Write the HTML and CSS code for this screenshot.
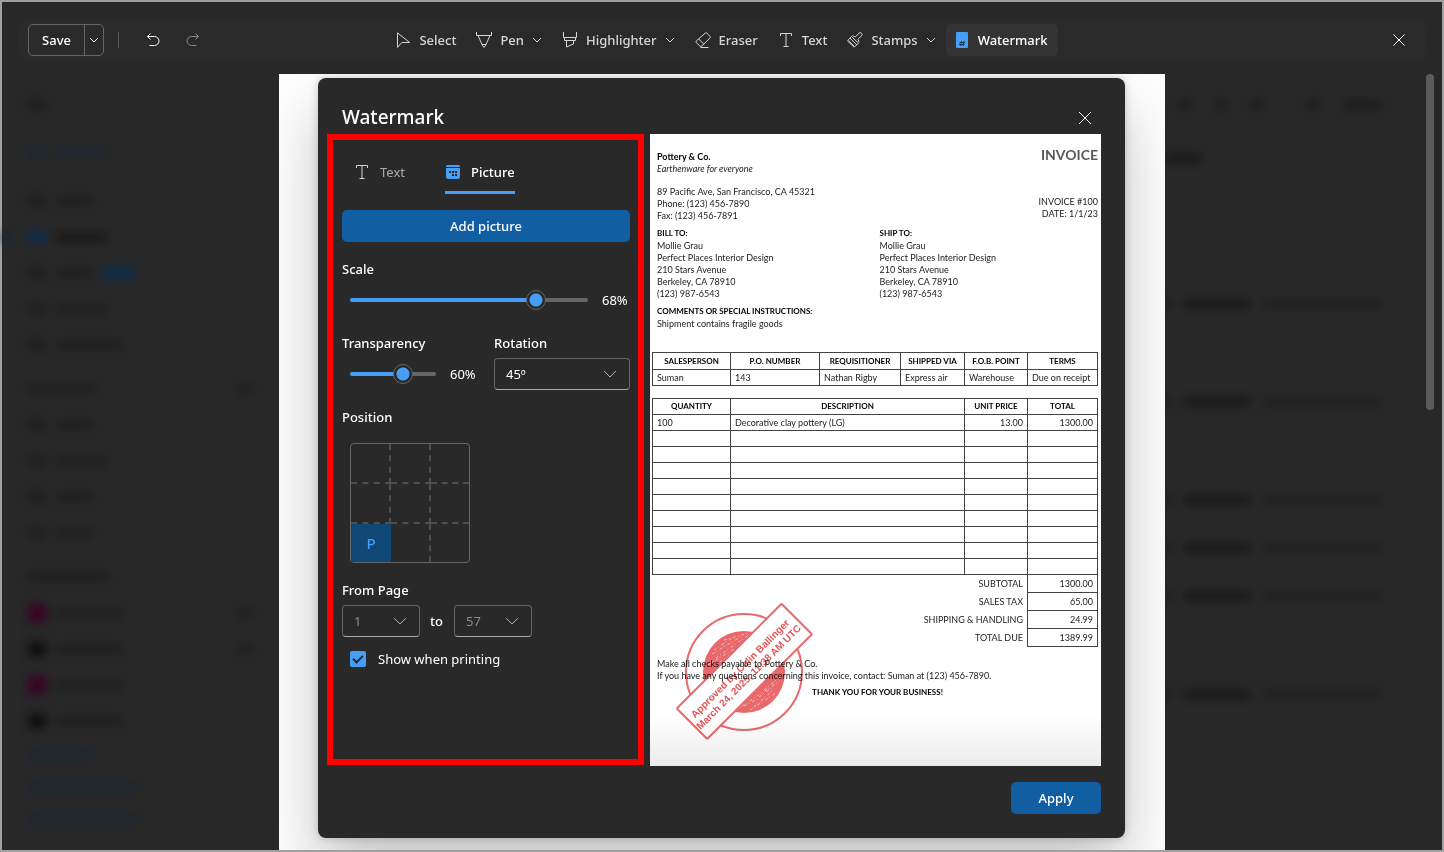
FILE: index.html
```
<!DOCTYPE html>
<html lang="en">
<head>
    <meta charset="UTF-8">
    <meta name="viewport" content="width=device-width, initial-scale=1.0">
    <title>Watermark</title>
    <link rel="stylesheet" href="styles.css">
</head>
<body>

<div class="window">
    <header class="toolbar">
        <div class="toolbar-left">
            <div class="split">
                <button class="split-main">Save</button>
                <button class="split-menu" aria-label="Save options">
                    <svg width="10" height="10" viewBox="0 0 10 10"><path d="M1 3l4 4 4-4"/></svg>
                </button>
            </div>
            <span class="divider"></span>
            <button class="icon-btn" aria-label="Undo">
                <svg width="16" height="16" viewBox="0 0 16 16"><path d="M5.500 1.500l-3 3 3 3M2.500 4.500h7a4.500 4.500 0 0 1 0 9H4.500"/></svg>
            </button>
            <button class="icon-btn dim" aria-label="Redo">
                <svg width="16" height="16" viewBox="0 0 16 16"><path d="M10.500 1.500l3 3-3 3M13.500 4.500h-7a4.500 4.500 0 0 0 0 9h5"/></svg>
            </button>
        </div>

        <nav class="tools">
            <button class="tool">
                <svg width="16" height="16" viewBox="0 0 16 16"><path d="M2.500 .8v14.600l4.300-4.900h7.800z"/></svg>
                Select
            </button>
            <button class="tool">
                <svg width="16" height="16" viewBox="0 0 16 16"><path d="M.5 0v3.500h15V0M2 3.500l4.200 9.500L8 15.500 9.800 13 14 3.500M6 12.500h4"/></svg>
                Pen
                <svg class="chev" width="10" height="10" viewBox="0 0 10 10"><path d="M1 3l4 4 4-4"/></svg>
            </button>
            <button class="tool">
                <svg width="16" height="16" viewBox="0 0 16 16"><path d="M1.500 0v5.500h13V0M2.500 5.500v3h11v-3M4.500 8.500v6.500l7-3V8.500"/></svg>
                Highlighter
                <svg class="chev" width="10" height="10" viewBox="0 0 10 10"><path d="M1 3l4 4 4-4"/></svg>
            </button>
            <button class="tool">
                <svg width="16" height="16" viewBox="0 0 16 16"><path d="M10.300 1q.7-.6 1.400 0l3.400 3.400q.6.7 0 1.400L7 13.900q-1.200 1-2.400 0L1.200 10.500q-.7-.7 0-1.400zM3.500 6.800l5.400 5.400M5.500 15.500h8"/></svg>
                Eraser
            </button>
            <button class="tool">
                <svg width="16" height="16" viewBox="0 0 16 16"><path d="M2.500 4V1.500h11V4M8 1.500v13M5.500 14.500h5"/></svg>
                Text
            </button>
            <button class="tool">
                <svg width="16" height="16" viewBox="0 0 16 16"><path d="M4.500 4.500L1.200 7.800q-.8.9 0 1.700l5 5q.9.8 1.700 0l3.600-3.300zM3 6.200l7 6.800M1.500 8.500l5.800 5.800M5.500 3.600l2.300 1q.8.300 1.400-.3l2.500-3a1.800 1.800 0 0 1 2.800 2.600l-3 2.700q-.6.500-.3 1.300l1.100 2.400"/></svg>
                Stamps
                <svg class="chev" width="10" height="10" viewBox="0 0 10 10"><path d="M1 3l4 4 4-4"/></svg>
            </button>
            <button class="tool active">
                <svg width="14" height="16" viewBox="0 0 14 16"><rect class="solid" width="12" height="16" rx="1"/><path class="ink" d="M5.500 9l-1 5M8 9l-1 5M3.500 10.500H9M3 12.500h5.500"/></svg>
                Watermark
            </button>
        </nav>

        <div class="toolbar-right">
            <button class="icon-btn" aria-label="Close editor">
                <svg width="16" height="16" viewBox="0 0 16 16"><path d="M2.500 2.500l11 11M13.500 2.500l-11 11"/></svg>
            </button>
        </div>
    </header>

    <main class="stage">
        <!-- File browser behind the editor, out of focus -->
        <div class="side" aria-hidden="true">
            <div class="ghost-row"><i class="ico"></i></div>
            <div class="ghost-row blue gap"><i class="ico"></i><i class="bar m"></i></div>
            <div class="ghost-row gap"><i class="ico"></i><i class="bar s"></i></div>
            <div class="ghost-row current"><i class="mark"></i><i class="ico"></i><i class="bar m"></i></div>
            <div class="ghost-row"><i class="ico"></i><i class="bar s"></i><i class="badge"></i></div>
            <div class="ghost-row"><i class="ico"></i><i class="bar m"></i></div>
            <div class="ghost-row"><i class="ico"></i><i class="bar l"></i></div>
            <div class="ghost-row head"><i class="bar l"></i><i class="end"></i></div>
            <div class="ghost-row"><i class="ico"></i><i class="bar s"></i></div>
            <div class="ghost-row"><i class="ico"></i><i class="bar m"></i></div>
            <div class="ghost-row"><i class="ico"></i><i class="bar s"></i></div>
            <div class="ghost-row"><i class="ico"></i><i class="bar s"></i></div>
            <div class="ghost-row head"><i class="bar xl"></i></div>
            <div class="ghost-row"><i class="ico pink"></i><i class="bar l"></i><i class="end"></i></div>
            <div class="ghost-row"><i class="ico black"></i><i class="bar l"></i><i class="end"></i></div>
            <div class="ghost-row"><i class="ico pink"></i><i class="bar l"></i></div>
            <div class="ghost-row"><i class="ico black"></i><i class="bar l"></i></div>
            <div class="ghost-row link"><i class="bar l"></i></div>
            <div class="ghost-row link"><i class="bar xxl"></i></div>
            <div class="ghost-row link"><i class="bar xxl"></i></div>
        </div>

        <div class="sheet">
            <section class="dialog" role="dialog" aria-labelledby="dialog-title">
                <div class="dialog-head">
                    <h1 id="dialog-title">Watermark</h1>
                    <button class="icon-btn" aria-label="Close">
                        <svg width="16" height="16" viewBox="0 0 16 16"><path d="M2 2l12 12M14 2L2 14"/></svg>
                    </button>
                </div>

                <div class="dialog-body">
                    <form class="panel">
                        <div class="tabs" role="tablist">
                            <button type="button" class="tab" role="tab" aria-selected="false">
                                <svg width="16" height="16" viewBox="0 0 16 16"><path d="M2.500 4V1.500h11V4M8 1.500v13M5.500 14.500h5"/></svg>
                                Text
                            </button>
                            <button type="button" class="tab selected" role="tab" aria-selected="true">
                                <svg width="16" height="16" viewBox="0 0 16 16"><path class="solid" d="M1 3V2.500Q1 1 2.500 1h11Q15 1 15 2.500V3zM1 4h14v8.500q0 2.500-2.500 2.500h-9Q1 15 1 12.500z"/><path class="hole" d="M4 7h2v2H4zM7 7h2v2H7zM10 7h2v2h-2zM7 10h2v2H7zM10 10h2v2h-2z"/></svg>
                                Picture
                            </button>
                        </div>

                        <button type="button" class="primary wide">Add picture</button>

                        <div class="field">
                            <label for="scale">Scale</label>
                            <div class="slider-row">
                                <input type="range" id="scale" min="0" max="84" value="68" style="--fill: 79%">
                                <output for="scale">68%</output>
                            </div>
                        </div>

                        <div class="pair">
                            <div class="field">
                                <label for="transparency">Transparency</label>
                                <div class="slider-row">
                                    <input type="range" id="transparency" min="0" max="92" value="60" style="--fill: 62%">
                                    <output for="transparency">60%</output>
                                </div>
                            </div>
                            <div class="field">
                                <label for="rotation">Rotation</label>
                                <div class="select">
                                    <select id="rotation"><option>45º</option></select>
                                    <svg width="14" height="14" viewBox="0 0 14 14"><path d="M1 4l6 6 6-6"/></svg>
                                </div>
                            </div>
                        </div>

                        <div class="label">Position</div>
                        <div class="position">
                            <button type="button" aria-label="Top left"></button>
                            <button type="button" aria-label="Top"></button>
                            <button type="button" aria-label="Top right"></button>
                            <button type="button" aria-label="Left"></button>
                            <button type="button" aria-label="Center"></button>
                            <button type="button" aria-label="Right"></button>
                            <button type="button" class="picked">P</button>
                            <button type="button" aria-label="Bottom"></button>
                            <button type="button" aria-label="Bottom right"></button>
                        </div>

                        <label class="label" for="from-page">From Page</label>
                        <div class="pages">
                            <div class="select">
                                <select id="from-page" disabled><option>1</option></select>
                                <svg width="14" height="14" viewBox="0 0 14 14"><path d="M1 4l6 6 6-6"/></svg>
                            </div>
                            <label for="to-page">to</label>
                            <div class="select">
                                <select id="to-page" disabled><option>57</option></select>
                                <svg width="14" height="14" viewBox="0 0 14 14"><path d="M1 4l6 6 6-6"/></svg>
                            </div>
                        </div>

                        <label class="check">
                            <input type="checkbox" checked>
                            Show when printing
                        </label>
                    </form>

                    <article class="invoice">
                        <div class="letterhead">
                            <div>
                                <div class="company">Pottery &amp; Co.</div>
                                <div class="motto">Earthenware for everyone</div>
                                <div>89 Pacific Ave, San Francisco, CA 45321</div>
                                <div>Phone: (123) 456-7890</div>
                                <div>Fax: (123) 456-7891</div>
                            </div>
                            <div class="meta">
                                <h2>INVOICE</h2>
                                <div>INVOICE #100</div>
                                <div>DATE: 1/1/23</div>
                            </div>
                        </div>

                        <div class="addresses">
                            <div>
                                <h3>BILL TO:</h3>
                                <div>Mollie Grau</div>
                                <div>Perfect Places Interior Design</div>
                                <div>210 Stars Avenue</div>
                                <div>Berkeley, CA 78910</div>
                                <div>(123) 987-6543</div>
                            </div>
                            <div>
                                <h3>SHIP TO:</h3>
                                <div>Mollie Grau</div>
                                <div>Perfect Places Interior Design</div>
                                <div>210 Stars Avenue</div>
                                <div>Berkeley, CA 78910</div>
                                <div>(123) 987-6543</div>
                            </div>
                        </div>

                        <div class="comments">
                            <h3>COMMENTS OR SPECIAL INSTRUCTIONS:</h3>
                            <div>Shipment contains fragile goods</div>
                        </div>

                        <table class="order">
                            <colgroup><col class="c1"><col class="c2"><col class="c3"><col class="c4"><col class="c5"><col class="c6"></colgroup>
                            <tr><th>SALESPERSON</th><th>P.O. NUMBER</th><th>REQUISITIONER</th><th>SHIPPED VIA</th><th>F.O.B. POINT</th><th>TERMS</th></tr>
                            <tr><td>Suman</td><td>143</td><td>Nathan Rigby</td><td>Express air</td><td>Warehouse</td><td>Due on receipt</td></tr>
                        </table>

                        <table class="items">
                            <colgroup><col class="c1"><col><col class="c5"><col class="c6"></colgroup>
                            <tr><th>QUANTITY</th><th>DESCRIPTION</th><th>UNIT PRICE</th><th>TOTAL</th></tr>
                            <tr><td>100</td><td>Decorative clay pottery (LG)</td><td class="num">13.00</td><td class="num">1300.00</td></tr>
                            <tr><td></td><td></td><td></td><td></td></tr>
                            <tr><td></td><td></td><td></td><td></td></tr>
                            <tr><td></td><td></td><td></td><td></td></tr>
                            <tr><td></td><td></td><td></td><td></td></tr>
                            <tr><td></td><td></td><td></td><td></td></tr>
                            <tr><td></td><td></td><td></td><td></td></tr>
                            <tr><td></td><td></td><td></td><td></td></tr>
                            <tr><td></td><td></td><td></td><td></td></tr>
                            <tr><td></td><td></td><td></td><td></td></tr>
                            <tr class="sum"><th colspan="3">SUBTOTAL</th><td>1300.00</td></tr>
                            <tr class="sum"><th colspan="3">SALES TAX</th><td>65.00</td></tr>
                            <tr class="sum"><th colspan="3">SHIPPING &amp; HANDLING</th><td>24.99</td></tr>
                            <tr class="sum"><th colspan="3">TOTAL DUE</th><td>1389.99</td></tr>
                        </table>

                        <div class="closing">
                            <div>Make all checks payable to Pottery &amp; Co.</div>
                            <div>If you have any questions concerning this invoice, contact: Suman at (123) 456-7890.</div>
                            <div class="thanks">THANK YOU FOR YOUR BUSINESS!</div>
                        </div>

                        <svg class="stamp" width="140" height="140" viewBox="0 0 140 140">
                            <circle cx="70" cy="70" r="58" class="ring"/>
                            <circle cx="70" cy="70" r="41" class="disc"/>
                            <g class="wear">
                                <path d="M38 52l30-18M42 56l34-24M46 60l20-15M34 63l26-16M50 38l25-7M40 48l18-12M76 108l26-17M68 104l38-25M80 105l20-18M62 108l24-12M90 88l16-13M85 95l14-10"/>
                            </g>
                            <g transform="rotate(-45 70 69)">
                                <rect x="-4" y="48" width="148" height="43" rx="1" class="plate"/>
                                <text x="69" y="68">Approved by Colin Ballinger</text>
                                <text x="69" y="80">March 24, 2025, 11:38 AM UTC</text>
                            </g>
                        </svg>
                    </article>
                </div>

                <div class="dialog-foot">
                    <button class="primary apply">Apply</button>
                </div>
            </section>
        </div>

        <div class="activity">
            <div class="feed" aria-hidden="true">
                <div class="feed-icons"><i></i><i></i><i></i><i class="last"></i><i class="more"></i></div>
                <div class="feed-title"></div>
                <div class="feed-row"><i></i><b></b><span></span></div>
                <div class="feed-row"><i></i><b></b><span></span></div>
                <div class="feed-row"><i></i><b></b><span></span></div>
                <div class="feed-row near"><i></i><b></b><span></span></div>
                <div class="feed-row near"><i></i><b></b><span></span></div>
                <div class="feed-row"><i></i><b></b><span></span></div>
            </div>
            <div class="scroll-thumb"></div>
        </div>
    </main>
</div>

</body>
</html>
```
FILE: styles.css
```
* {
    box-sizing: border-box;
}

body {
    margin: 0;
    background: #282828;
    color: #fff;
    font-family: "Noto Sans", "Open Sans", sans-serif;
    font-size: 13px;
    line-height: 20px;
}

button, select {
    font: inherit;
    color: inherit;
}

button {
    background: none;
    border: 0;
    padding: 0;
    cursor: pointer;
}

svg {
    display: block;
    flex: none;
    fill: none;
    stroke: currentColor;
    stroke-width: 1;
}

.solid {
    fill: #479ef5;
    stroke: none;
}

.ink {
    stroke: #173a5c;
}

.hole {
    fill: #292929;
    stroke: none;
}

.window {
    min-height: 100vh;
    border: 2px solid #a0a0a0;
    display: flex;
    flex-direction: column;
}

/* Toolbar */
.toolbar {
    display: grid;
    grid-template-columns: 1fr auto 1fr;
    align-items: center;
    height: 44px;
    margin: 16px 16px 12px;
    padding: 0 11px 0 10px;
    border-radius: 12px;
    background: #2a2a2a;
    font-weight: 500;
}

.toolbar-left {
    display: flex;
    align-items: center;
}

.toolbar-right {
    display: flex;
    justify-content: flex-end;
}

.split {
    display: flex;
    height: 32px;
    border: 1px solid #666;
    border-radius: 5px;
}

.split-main {
    width: 55px;
}

.split-menu {
    width: 19px;
    padding-left: 4px;
    border-left: 1px solid #666;
}

.divider {
    width: 1px;
    height: 16px;
    margin: 0 18px 0 14px;
    background: #5c5c5c;
}

.icon-btn {
    display: flex;
    align-items: center;
    justify-content: center;
    width: 32px;
    height: 32px;
}

.icon-btn + .icon-btn {
    margin-left: 8px;
}

.dim {
    color: #8a8a8a;
}

.tools {
    display: flex;
}

.tool {
    display: flex;
    align-items: center;
    gap: 8px;
    height: 32px;
    padding: 0 10px;
    border-radius: 5px;
    color: #d6d6d6;
}

.tool.active {
    background: #333;
    color: #fff;
}

/* Stage */
.stage {
    flex: 1;
    display: grid;
    grid-template-columns: 277px 1fr 277px;
}

.side {
    padding: 13px 27px 0 26px;
    filter: blur(5px);
}

.ghost-row {
    display: flex;
    align-items: center;
    gap: 10px;
    height: 36px;
}

.ghost-row i {
    height: 8px;
    background: #1f1f1f;
}

.ghost-row .ico {
    width: 18px;
    height: 10px;
}

.ghost-row .s { width: 36px; }
.ghost-row .m { width: 50px; }
.ghost-row .l { width: 66px; }
.ghost-row .xl { width: 80px; }
.ghost-row .xxl { width: 110px; }

.ghost-row .end {
    width: 14px;
    margin-left: auto;
}

.ghost-row.gap {
    margin-top: 12px;
}

.ghost-row.head {
    margin-top: 8px;
}

.ghost-row.blue i,
.ghost-row.link i {
    background: #1c2733;
}

.ghost-row.link {
    height: 32px;
}

.ghost-row.current {
    margin-left: -26px;
}

.ghost-row.current .mark {
    width: 8px;
    margin-right: 8px;
    background: #122538;
}

.ghost-row.current .ico,
.ghost-row .badge {
    height: 12px;
    background: #0d2c4b;
}

.ghost-row.current .bar {
    background: #171717;
}

.ghost-row .badge {
    width: 32px;
}

.ghost-row .pink {
    height: 18px;
    background: #380325;
}

.ghost-row .black {
    height: 14px;
    background: #0e0e0e;
}

.sheet {
    display: grid;
    overflow: hidden;
    padding: 4px 40px 12px 39px;
    background: #fff;
}

.activity {
    display: flex;
    justify-content: space-between;
    align-items: flex-start;
    padding-right: 8px;
    overflow: hidden;
}

.feed {
    width: 216px;
    padding-top: 26px;
    filter: blur(4px);
}

.feed-icons {
    display: flex;
    gap: 24px;
    padding-left: 14px;
}

.feed-icons i {
    width: 12px;
    height: 10px;
    background: #1f1f1f;
}

.feed-icons .last {
    margin-left: 20px;
}

.feed-icons .more {
    flex: 1;
}

.feed-title {
    width: 36px;
    height: 8px;
    margin: 44px 0 138px;
    background: #181818;
}

.feed-row {
    display: flex;
    gap: 14px;
    height: 8px;
    margin-bottom: 90px;
}

.feed-row i {
    width: 5px;
    background: #181818;
}

.feed-row b {
    width: 66px;
    background: #181818;
}

.feed-row span {
    flex: 1;
    background: #212121;
}

.feed-row.near {
    margin-top: -50px;
}

.scroll-thumb {
    width: 8px;
    height: 336px;
    border-radius: 4px;
    background: #5c5c5c;
}

/* Dialog */
.dialog {
    display: flex;
    flex-direction: column;
    padding: 0 24px 24px 9px;
    border-radius: 8px;
    background: #292929;
    box-shadow: 0 0 8px rgba(0, 0, 0, 0.2), 0 32px 64px rgba(0, 0, 0, 0.24);
}

.dialog-head {
    display: flex;
    justify-content: space-between;
    padding: 24px 0 0 15px;
}

.dialog-head h1 {
    margin: 0;
    font-size: 19px;
    font-weight: 500;
    line-height: 30px;
}

.dialog-body {
    flex: 1;
    display: grid;
    grid-template-columns: 317px 1fr;
    gap: 6px;
}

.dialog-foot {
    display: flex;
    justify-content: flex-end;
    padding-top: 16px;
}

.primary {
    height: 32px;
    border-radius: 5px;
    background: #115ea3;
    font-weight: 500;
}

.apply {
    width: 90px;
}

.wide {
    width: 100%;
}

/* Settings panel */
.panel {
    margin-bottom: 1px;
    padding: 12px 8px 0 9px;
    border: 6px solid #f00;
}

.tabs {
    display: flex;
    gap: 20px;
    margin: 0 0 16px 12px;
}

.tab {
    display: flex;
    align-items: center;
    gap: 10px;
    height: 42px;
    color: #adadad;
    border-bottom: 3px solid transparent;
}

.tab svg {
    color: #d6d6d6;
}

.tab + .tab {
    margin-left: 20px;
}

.tab.selected {
    color: #fff;
    font-weight: 500;
    border-bottom-color: #479ef5;
}

.field label,
.label {
    display: block;
    font-weight: 500;
}

.field {
    margin-top: 17px;
    min-width: 0;
}

.slider-row {
    display: flex;
    align-items: center;
    gap: 14px;
    height: 32px;
    margin: 5px 0 0 8px;
}

.slider-row input {
    flex: 1;
    min-width: 0;
    height: 20px;
    margin: 0;
    appearance: none;
    background: none;
}

.slider-row output {
    width: 28px;
}

.slider-row input::-webkit-slider-runnable-track {
    height: 4px;
    border-radius: 2px;
    background: linear-gradient(to right, #479ef5 var(--fill), #666 var(--fill));
}

.slider-row input::-webkit-slider-thumb {
    appearance: none;
    width: 20px;
    height: 20px;
    margin-top: -8px;
    border: 1px solid #666;
    border-radius: 50%;
    background: radial-gradient(circle, #479ef5 6px, #292929 7px);
}

.pair {
    display: grid;
    grid-template-columns: 1fr 136px;
    gap: 16px;
}

.select {
    position: relative;
    margin-top: 5px;
}

.select select {
    display: block;
    width: 100%;
    height: 32px;
    padding: 0 11px;
    appearance: none;
    background: #292929;
    border: 1px solid #666;
    border-bottom-color: #adadad;
    border-radius: 4px;
    opacity: 1;
}

.select select:disabled {
    color: #8a8a8a;
}

.select svg {
    position: absolute;
    right: 13px;
    top: 9px;
    color: #adadad;
    pointer-events: none;
}

.pair + .label {
    margin-top: 17px;
}

.position {
    display: grid;
    grid-template-columns: 40px 40px 1fr;
    grid-template-rows: 40px 40px 1fr;
    width: 120px;
    height: 120px;
    margin: 16px 0 17px 8px;
    border: 1px solid #666;
    border-radius: 4px;
}

.position button {
    min-height: 0;
    border: 0 dashed #4e4e4e;
    border-width: 0 2px 2px 0;
}

.position button:nth-child(3n) {
    border-right: 0;
}

.position button:nth-child(n+7) {
    border-bottom: 0;
}

.position .picked {
    border: 0;
    background: #0f4775;
    color: #479ef5;
    font-size: 15px;
    font-weight: 500;
}

.pages {
    display: flex;
    align-items: center;
    gap: 10px;
    font-weight: 500;
}

.pages .select {
    width: 78px;
    font-weight: 400;
}

.pages > label {
    width: 14px;
    padding-top: 5px;
}

.check {
    display: flex;
    align-items: center;
    gap: 12px;
    margin: 12px 0 0 8px;
}

.check input {
    appearance: none;
    width: 16px;
    height: 16px;
    margin: 0;
    border-radius: 2px;
    background: #479ef5;
    display: grid;
    place-items: center;
}

.check input:checked::after {
    content: "";
    width: 8px;
    height: 4px;
    border: solid #292929;
    border-width: 0 0 2px 2px;
    transform: translateY(-1px) rotate(-45deg);
}

/* Invoice preview */
.invoice {
    position: relative;
    padding: 17px 3px 0 2px;
    background: linear-gradient(#fff 92%, #ebebeb);
    color: #222;
    font-family: Lato, sans-serif;
    font-size: 9px;
    line-height: 12px;
}

.invoice h2,
.invoice h3 {
    margin: 0;
    font-size: inherit;
    font-weight: 700;
    line-height: inherit;
    color: #000;
}

.invoice h3 {
    margin-bottom: 1px;
    font-size: 8px;
}

.letterhead {
    display: flex;
    justify-content: space-between;
    padding-left: 5px;
}

.company {
    font-weight: 700;
    color: #000;
}

.motto {
    margin-bottom: 11px;
    font-style: italic;
}

.meta {
    text-align: right;
}

.invoice .meta h2 {
    margin-bottom: 37px;
    color: #595959;
    font-size: 14px;
    line-height: 8px;
}

.addresses {
    display: grid;
    grid-template-columns: 1fr 1fr;
    column-gap: 4px;
    margin-top: 5px;
    padding-left: 5px;
}

.comments {
    margin: 5px 0 22px;
    padding-left: 5px;
}

.invoice table {
    width: 100%;
    table-layout: fixed;
    border-collapse: collapse;
}

.invoice td,
.invoice th {
    height: 16px;
    padding: 0 4px;
    border: 1px solid #444;
    line-height: 15px;
    text-align: left;
    white-space: nowrap;
}

.invoice th {
    padding: 0;
    color: #000;
    font-size: 8px;
    text-align: center;
}

.c1 { width: 78px; }
.c2 { width: 89px; }
.c3 { width: 81px; }
.c4 { width: 64px; }
.c5 { width: 63px; }
.c6 { width: 70px; }

.order {
    margin-bottom: 12px;
}

.invoice .order th {
    height: 17px;
}

.invoice .num,
.invoice .sum td {
    text-align: right;
}

.invoice .sum th {
    height: 18px;
    padding-right: 4px;
    border: 0;
    color: #222;
    font-size: 9px;
    font-weight: 400;
    text-align: right;
}

.closing {
    margin-top: 11px;
    padding-left: 5px;
}

.thanks {
    margin-top: 4px;
    color: #000;
    font-size: 8px;
    font-weight: 700;
    text-align: center;
}

.stamp {
    position: absolute;
    left: 24px;
    top: 468px;
    mix-blend-mode: multiply;
}

.ring {
    stroke: #e76a6c;
    stroke-width: 2;
}

.disc {
    fill: #e8686b;
    stroke: none;
}

.wear {
    stroke: #f5bcbd;
    stroke-dasharray: 3 2 1 3;
}

.plate {
    fill: #fff;
    stroke: #e76a6c;
    stroke-width: 2;
}

.stamp text {
    fill: #e25558;
    stroke: none;
    font-family: "Liberation Sans", Arial, sans-serif;
    font-size: 10px;
    font-weight: 700;
    text-anchor: middle;
}
```
